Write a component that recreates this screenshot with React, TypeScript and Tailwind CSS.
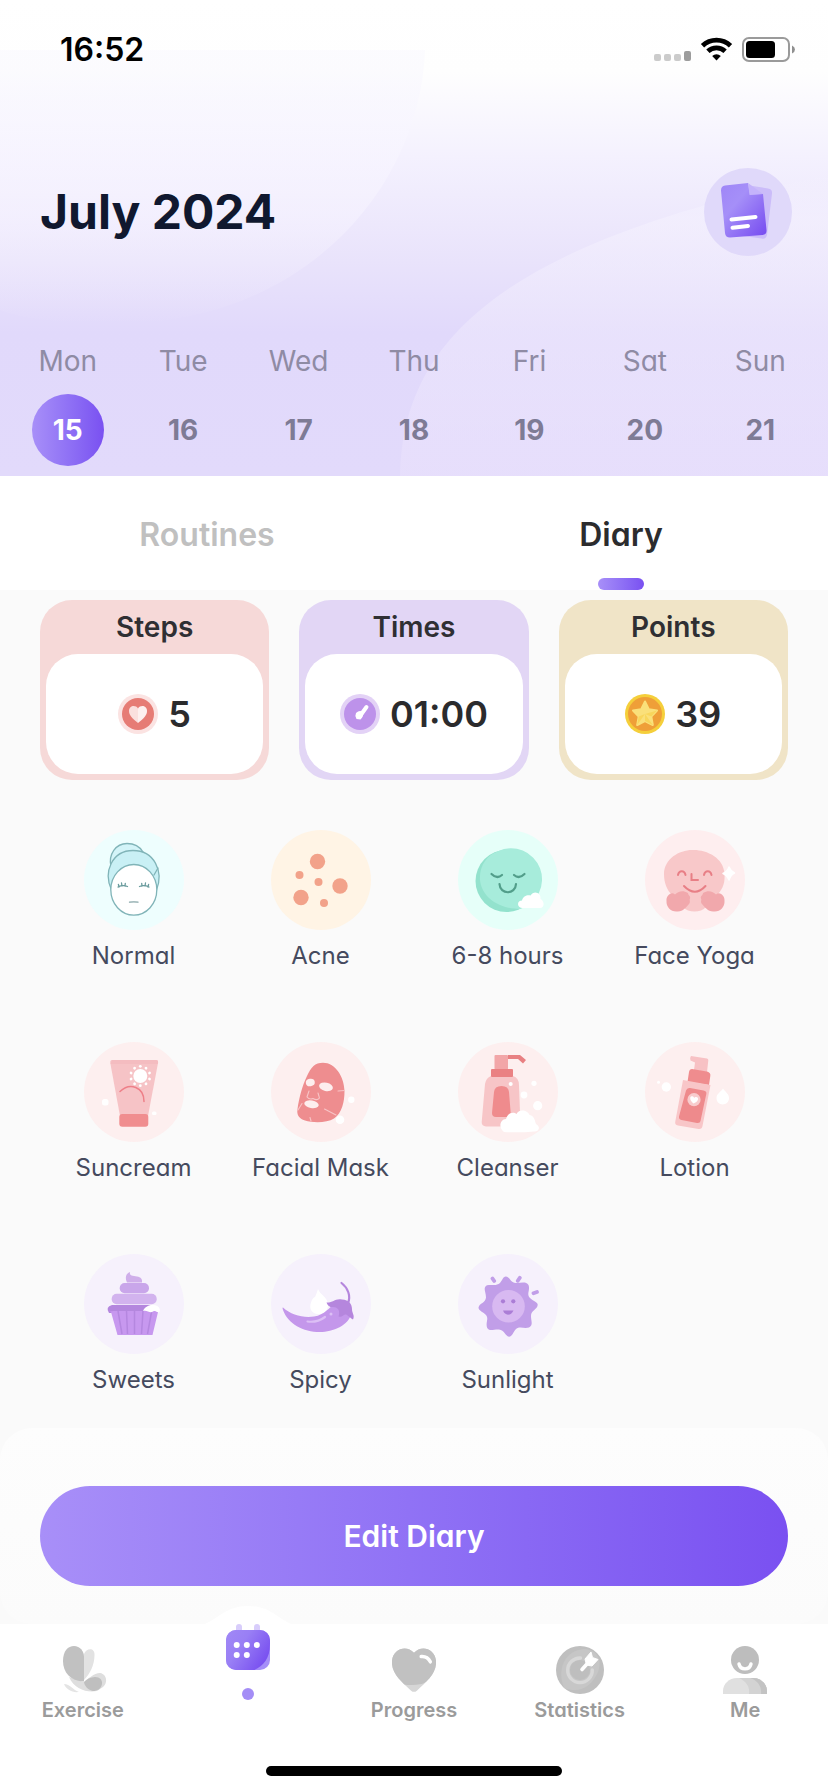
import React, { useState } from "react";

/* ---------- Status bar ---------- */

function StatusBar() {
  return (
    <div className="flex h-7 items-center justify-between pr-[33px] pl-[60px]">
      <span className="text-[32px] leading-7 font-semibold text-black">16:52</span>
      <svg width="142" height="28" viewBox="0 0 142 28" aria-label="Signal, wifi and battery">
        <g fill="#cbcbcb">
          <rect x="1" y="18" width="7" height="7" rx="2" />
          <rect x="11" y="18" width="7" height="7" rx="2" />
          <rect x="21" y="18" width="7" height="7" rx="2" />
        </g>
        <rect x="31" y="15" width="7" height="10" rx="2" fill="#9c9c9c" />
        <g transform="translate(63.5 24.5)" fill="none" stroke="#000" strokeWidth="4.8">
          <path d="M-14 -14.8 A20.4 20.4 0 0 1 14 -14.8" />
          <path d="M-8.6 -9.2 A12.6 12.6 0 0 1 8.6 -9.2" />
          <path d="M0 0 L-4.3 -4.4 A6.2 6.2 0 0 1 4.3 -4.4 Z" fill="#000" stroke="none" />
        </g>
        <rect x="90" y="2" width="46" height="23" rx="6" fill="#fff" stroke="#9a9a9a" strokeWidth="2" />
        <rect x="93" y="5" width="29" height="17" rx="3.5" fill="#000" />
        <path d="M139 9.500 q3 1.500 3 4 t-3 4 z" fill="#8f8f8f" />
      </svg>
    </div>
  );
}

/* ---------- Header ---------- */

function HeaderBackdrop() {
  return (
    <svg
      className="absolute inset-0 h-full w-full"
      viewBox="0 0 828 476"
      preserveAspectRatio="xMidYMid slice"
      aria-hidden="true"
    >
      <defs>
        <linearGradient id="sky" x1="0" y1="0" x2="0" y2="1">
          <stop offset="0" stopColor="#ffffff" />
          <stop offset="0.15" stopColor="#fefefe" />
          <stop offset="0.33" stopColor="#f4f1fe" />
          <stop offset="0.55" stopColor="#e9e3fb" />
          <stop offset="0.7" stopColor="#e1d9fb" />
          <stop offset="1" stopColor="#e2dafb" />
        </linearGradient>
        <linearGradient id="bubbleLeft" x1="0" y1="0" x2="0" y2="1">
          <stop offset="0" stopColor="#f8f7fe" stopOpacity="0.4" />
          <stop offset="0.3" stopColor="#f8f6ff" stopOpacity="0.7" />
          <stop offset="0.6" stopColor="#f6f3ff" stopOpacity="0.6" />
          <stop offset="1" stopColor="#f3effe" stopOpacity="0" />
        </linearGradient>
        <linearGradient id="bubbleRight" x1="0" y1="0" x2="0" y2="1">
          <stop offset="0" stopColor="#f6f4ff" stopOpacity="0" />
          <stop offset="0.15" stopColor="#f6f3ff" stopOpacity="0.5" />
          <stop offset="0.45" stopColor="#f2eefd" stopOpacity="0.45" />
          <stop offset="1" stopColor="#efe6fd" stopOpacity="0.35" />
        </linearGradient>
      </defs>
      <rect width="828" height="476" fill="url(#sky)" />
      <path d="M425 50 C420 190 300 330 100 324 C50 322 20 318 0 310 V50 Z" fill="url(#bubbleLeft)" />
      <path d="M400 476 C402 330 520 240 828 175 V476 Z" fill="url(#bubbleRight)" />
    </svg>
  );
}

function NotesIcon() {
  return (
    <svg width="88" height="88" viewBox="0 0 88 88" aria-hidden="true">
      <defs>
        <linearGradient id="page" x1="0" y1="0" x2="1" y2="1">
          <stop offset="0" stopColor="#9f86f7" />
          <stop offset="0.35" stopColor="#a58ff8" />
          <stop offset="1" stopColor="#7549f0" />
        </linearGradient>
      </defs>
      <path d="M36 16 L64 20.500 Q68.500 21 68 25.500 L63 67 Q62 71.500 57.500 70.500 L32 67 Z" fill="#cbbcf9" />
      <path
        d="M21 17.500 L44 15 L46 26.500 L59 26 L62.500 62 Q63 66.500 58.500 67 L26 69.500 Q21.500 69.500 21 65 L17 22.500 Q17 18 21 17.500 Z"
        fill="url(#page)"
      />
      <path d="M44 15 L59 26 L45.500 27 Z" fill="#c4b3fb" />
      <path d="M27.500 51.500 L51.500 49 M28.500 59.800 L44 58" stroke="#fff" strokeWidth="4" strokeLinecap="round" />
    </svg>
  );
}

const days = [
  { name: "Mon", date: 15 },
  { name: "Tue", date: 16 },
  { name: "Wed", date: 17 },
  { name: "Thu", date: 18 },
  { name: "Fri", date: 19 },
  { name: "Sat", date: 20 },
  { name: "Sun", date: 21 },
];

function Header() {
  const [selected, setSelected] = useState(15);
  return (
    <header className="relative">
      <HeaderBackdrop />
      <div className="relative pt-9 pb-[10px]">
        <StatusBar />
        <div className="mt-[104px] flex items-center justify-between pr-9 pl-10">
          <h1 className="text-[48px] leading-[60px] font-bold text-[#10182f]">July 2024</h1>
          <button type="button" aria-label="Notes" className="rounded-full bg-[#e0d9fa]">
            <NotesIcon />
          </button>
        </div>
        <div className="mt-[85px] grid grid-cols-7 px-[10px]">
          {days.map((d) => (
            <button
              key={d.date}
              type="button"
              onClick={() => setSelected(d.date)}
              className="flex flex-col items-center gap-[13px]"
            >
              <span className="text-[28px] leading-10 text-[#8f8ba4]">{d.name}</span>
              <span
                className={
                  d.date === selected
                    ? "flex h-[72px] w-[72px] items-center justify-center rounded-full bg-gradient-to-r from-[#a88ff8] to-[#7a50f1] text-[28px] font-bold text-white"
                    : "flex h-[72px] w-[72px] items-center justify-center rounded-full text-[28px] font-bold text-[#7e7b95]"
                }
              >
                {d.date}
              </span>
            </button>
          ))}
        </div>
      </div>
    </header>
  );
}

/* ---------- Tabs ---------- */

function Tabs() {
  const [active, setActive] = useState("Diary");
  return (
    <div role="tablist" className="grid grid-cols-2 bg-white">
      {["Routines", "Diary"].map((t) => (
        <button
          key={t}
          type="button"
          role="tab"
          aria-selected={t === active}
          onClick={() => setActive(t)}
          className="flex flex-col items-center gap-[23px] pt-[39px]"
        >
          <span
            className={
              t === active
                ? "text-[32px] leading-10 font-semibold text-[#2c2c2e]"
                : "text-[32px] leading-10 font-semibold text-[#c0c0c0]"
            }
          >
            {t}
          </span>
          <span
            className={
              t === active
                ? "h-3 w-[46px] rounded-full bg-gradient-to-r from-[#a88ff8] to-[#7a50f1]"
                : "h-3 w-[46px]"
            }
          />
        </button>
      ))}
    </div>
  );
}

/* ---------- Summary cards ---------- */

function HeartBadge() {
  return (
    <svg width="40" height="40" viewBox="0 0 40 40" aria-hidden="true">
      <circle cx="20" cy="20" r="20" fill="#fbe3e2" />
      <circle cx="20" cy="20" r="16" fill="#e67c75" />
      <path d="M20 29 C14 24.500 11 21 11 17 C11 11.500 17.500 10.500 20 14.500 Z" fill="#fae0de" />
      <path d="M20 29 C26 24.500 29 21 29 17 C29 11.500 22.500 10.500 20 14.500 Z" fill="#fdf0ef" />
    </svg>
  );
}

function ClockBadge() {
  return (
    <svg width="40" height="40" viewBox="0 0 40 40" aria-hidden="true">
      <circle cx="20" cy="20" r="20" fill="#e3d2f6" />
      <circle cx="20" cy="20" r="16" fill="#bd92ea" />
      <path d="M20 22 L26.500 13" stroke="#fff" strokeWidth="4" strokeLinecap="round" />
      <path d="M16 19 Q20 15.500 23 18.500 Q24 22 20.500 25.500 L16.500 25 Q14.500 22 16 19 Z" fill="#fff" />
    </svg>
  );
}

function StarBadge() {
  return (
    <svg width="40" height="40" viewBox="0 0 40 40" aria-hidden="true">
      <circle cx="20" cy="20" r="20" fill="#f5cf3b" />
      <circle cx="20" cy="20" r="17" fill="#ef9f38" />
      <path
        d="M20 7.500 L23.800 15.200 L32 16.500 L26.300 22.500 L27.800 31 L20 27 L12.200 31 L13.700 22.500 L8 16.500 L16.200 15.200 Z"
        fill="#fae07a"
        stroke="#fae07a"
        strokeWidth="2"
        strokeLinejoin="round"
      />
      <path d="M20 20 L32 16.500 L26.300 22.500 Z M20 20 L27.800 31 L20 27 Z M20 20 L12.200 31 L13.700 22.500 Z" fill="#f8d65c" />
    </svg>
  );
}

function SummaryCard({
  title,
  value,
  tone,
  badge,
}: {
  title: string;
  value: string;
  tone: string;
  badge: React.ReactNode;
}) {
  return (
    <section className={`rounded-[32px] px-[6px] pb-[6px] ${tone}`}>
      <h2 className="text-center text-[28px] leading-[54px] font-semibold text-[#2f2f33]">{title}</h2>
      <div className="flex h-[120px] items-center justify-center gap-[10px] rounded-[32px] bg-white">
        {badge}
        <span className="text-[36px] leading-10 font-semibold text-[#2b2b2d]">{value}</span>
      </div>
    </section>
  );
}

/* ---------- Diary icons, drawn on a 100 unit disc ---------- */

function Disc({ fill, children }: { fill: string; children: React.ReactNode }) {
  return (
    <svg width="100" height="100" viewBox="0 0 100 100" aria-hidden="true">
      <circle cx="50" cy="50" r="50" fill={fill} />
      {children}
    </svg>
  );
}

function NormalIcon() {
  return (
    <Disc fill="#eefefe">
      <g stroke="#80b4b8" strokeWidth="1.3" strokeLinecap="round">
        <path d="M27 37 C24 24 32 13.500 43 13.500 C51 13.500 56 17 59 22 L43 46 Z" fill="#d3f4f8" />
        <path d="M27.500 60 C19 42 28 20.500 49 20.500 C70 20.500 80 41 72.500 60 Z" fill="#c9f0f5" />
        <path d="M70 45 L74 38" fill="none" />
        <ellipse cx="49.800" cy="59.800" rx="23" ry="25.300" fill="#fff" />
        <path d="M34 57 Q39 54.500 43.500 56.500 M35 57 l-0.600 -2.500 M38 56 l-0.500 -3 M41 56 l0.300 -2.600" fill="none" stroke="#6b9c9e" />
        <path d="M55.500 56.500 Q60 54.500 65 57 M58 56 l-0.300 -2.600 M61 56 l0.500 -3 M64 57 l0.600 -2.500" fill="none" stroke="#6b9c9e" />
        <path d="M45.500 72.200 Q50 71.500 54 72.200" fill="none" stroke="#87a6a8" />
      </g>
    </Disc>
  );
}

function AcneIcon() {
  return (
    <Disc fill="#fff4e5">
      <g fill="#f2a28a">
        <circle cx="46.500" cy="31.500" r="7.700" />
        <circle cx="28.500" cy="45" r="4" />
        <circle cx="47.500" cy="52" r="4" />
        <circle cx="69" cy="56" r="7.700" />
        <circle cx="30" cy="67.500" r="7.700" />
        <circle cx="53" cy="73" r="4" />
      </g>
    </Disc>
  );
}

function SleepIcon() {
  return (
    <Disc fill="#e6fff9">
      <circle cx="48.500" cy="51" r="31" fill="#93e2cd" />
      <path d="M40 21.200 A31 31 0 1 1 62 79 C45 79 24 70 22 50 C21 36 29 25 40 21.200 Z" fill="#a7ecdb" />
      <g fill="none" stroke="#529e8a" strokeWidth="2.200" strokeLinecap="round">
        <path d="M33.500 44 Q39 49.500 44 45" />
        <path d="M56 45 Q61 49.500 66.500 44" />
        <path d="M41.500 54 C42 65 57.500 65 58 54" />
      </g>
      <path d="M64 78 C58.500 77 59 70.500 64 70.500 C65 65.500 70 64.500 72.500 65.500 C76 59.500 83.500 63 82.500 69 C87 71.500 86.500 78 82 78 Z" fill="#fff" />
    </Disc>
  );
}

function YogaIcon() {
  return (
    <Disc fill="#feeeef">
      <path
        d="M49 20 C36 19 19 28 19 44 C19 53 22 60 27 65 L38 77 C43 83 56 83 61 77 L72 65 C79 58 80 51 79.500 44 C79 28 62 20 49 20 Z"
        fill="#f8c8c9"
      />
      <path
        d="M43 63 C37 59.500 33 62 30 64.500 C26 61 21 66 21.500 71 C21 77 26 82 32 81.500 C38 82 41 77 44 74 C46 71.500 44 70.500 45 68.500 C46 66 43 65.500 43 63 Z"
        fill="#f1a8ac"
      />
      <path
        d="M58 63 C64 59.500 68 62 71 64.500 C75 61 80 66 79.500 71 C80 77 75 82 69 81.500 C63 82 60 77 57 74 C55 71.500 57 70.500 56 68.500 C55 66 58 65.500 58 63 Z"
        fill="#f1a8ac"
      />
      <g fill="none" stroke="#e87f86" strokeWidth="2" strokeLinecap="round">
        <path d="M33 45 C34 40 39.500 40 40.500 45" />
        <path d="M59 45 C60 40 65.500 40 66.500 45" />
        <path d="M46.500 44 V50 H53" />
        <path d="M39 56 Q50 67.500 60.500 56" />
      </g>
      <path d="M84 37 Q85.500 41 89.500 43 Q85.500 45 84 50 Q82 45 78 43.500 Q82.500 41.500 84 37 Z" fill="#fff" stroke="#fff" strokeWidth="1.500" strokeLinejoin="round" />
    </Disc>
  );
}

const rays = [0, 36, 72, 108, 144, 180, 216, 252, 288, 324];

function SuncreamIcon() {
  return (
    <Disc fill="#fdefef">
      <path d="M28 18 H72 Q74.500 18 74 21 L64 74 H36 L26.300 21 Q26 18 28 18 Z" fill="#f6c3c6" />
      <path d="M28 18 H72 Q74.500 18 74 21 L73.500 22 H26.500 Z" fill="#f4bcc0" />
      <rect x="35.300" y="72" width="29" height="12.700" rx="3" fill="#f08d8f" />
      <circle cx="56.300" cy="34" r="7" fill="#fff" />
      {rays.map((a) => (
        <circle key={a} cx="56.300" cy="24.300" r="1.400" fill="#fff" transform={`rotate(${a} 56.300 34)`} />
      ))}
      <path d="M36 49.500 C46 40 60 45 60 59.500" fill="none" stroke="#ee7f88" strokeWidth="1.500" strokeLinecap="round" />
      <rect x="18" y="57" width="6.500" height="6.500" rx="2.500" fill="#fff" />
      <rect x="68" y="69.500" width="4.500" height="3.500" rx="1.500" fill="#fff" />
    </Disc>
  );
}

function MaskIcon() {
  return (
    <Disc fill="#fdefef">
      <path
        d="M52 20.700 C64 20.700 73 34 73.500 49 C73.500 60 71 71 63 76.500 C56 81 42 81 34 78.500 C28 76.500 25.500 73 26.500 67 C28 57 31 44 36 34 C40 25 44 20.700 52 20.700 Z"
        fill="#ee8d8f"
      />
      <g fill="#fdeeee">
        <ellipse cx="39.300" cy="40.500" rx="4.500" ry="3.700" transform="rotate(-8 39.300 40.500)" />
        <ellipse cx="55" cy="44.800" rx="7" ry="4.200" transform="rotate(12 55 44.800)" />
        <ellipse cx="40.500" cy="62.300" rx="7.300" ry="3.800" transform="rotate(10 40.500 62.300)" />
      </g>
      <g fill="none" stroke="#f8c4c6" strokeWidth="1.100" strokeLinecap="round">
        <path d="M38 49 L36 55 Q38.500 58 42 56.500 Q46 59 48.500 56 L47 51" />
        <path d="M67 49 L73.500 48.500 M53.500 67 L65 73 M27 68 L31 61.500 M39 75.500 L40 79" />
      </g>
      <circle cx="80.300" cy="57.700" r="3.200" fill="#fff" />
      <circle cx="69" cy="77.700" r="4.300" fill="#fff" />
    </Disc>
  );
}

function CleanserIcon() {
  return (
    <Disc fill="#fdefef">
      <rect x="36.500" y="13" width="13.500" height="14.500" rx="1" fill="#f2a6a8" />
      <path d="M50 13 H62 L68 18 L65 21.500 L60 17 H50 Z" fill="#e88082" />
      <path d="M33 34 H55 Q61 36 61 43 L62.500 84.500 H28 Q23.500 84.500 23.700 80 L27 42 Q28 36 33 34 Z" fill="#f7c5c7" />
      <rect x="33" y="27" width="22" height="8" rx="1" fill="#ea8183" />
      <path d="M36 50 Q36.500 44 43.500 44 Q50.500 44 51 50 L53 75 H38 Q34 75 34 71 Z" fill="#ef8b8d" />
      <path d="M46 90 C40 86 42 77 48 77 C50 70 56 70 58.500 72 C62 66 70 69 71.500 73 C77 74 77 80 78 82 C83 85 81 90 76 89.500 C66 90.500 55 90.500 46 90 Z" fill="#fff" />
      <circle cx="52.700" cy="42" r="2" fill="#fff" />
      <circle cx="76" cy="41.300" r="2.600" fill="#fff" />
      <circle cx="66" cy="53" r="3.400" fill="#fff" />
      <circle cx="79.700" cy="63.700" r="4.600" fill="#fff" />
    </Disc>
  );
}

function LotionIcon() {
  return (
    <Disc fill="#fdefef">
      <path d="M46 14 L62 16.500 Q63.500 17 63.300 18.500 L62 30 L49 28 L50 20.500 L45.500 18.500 Q44.500 15.500 46 14 Z" fill="#f7c1c4" />
      <path d="M47 27 L62 29.500 Q66 30.500 65.300 34 L64 43 L42.500 40 L44 30 Q44.500 27 47 27 Z" fill="#ef8c8e" />
      <path d="M38 38 L65.500 43 L57.500 84 Q57 87.500 53.500 87 L33 83.500 Q29.500 83 30.300 79.500 Z" fill="#f8c6c8" />
      <path d="M45 46 L58.500 48.500 Q62 49.200 61.300 52 L55.500 79 Q55 81.500 52 81 L36.500 78 Q33.500 77.300 34 74.500 L41 48.500 Q42 45.500 45 46 Z" fill="#ee8a8c" />
      <circle cx="49" cy="57.700" r="6.600" fill="#f8cccd" />
      <path d="M48.500 61.500 C44.500 58.500 44.500 54.500 46.700 54.300 C48.500 54 49 55.500 49.200 56 C50 54.700 53.500 54.500 53 57.500 C52.500 59.500 50.500 60.500 48.500 61.500 Z" fill="#fff" />
      <circle cx="21.300" cy="45" r="4.700" fill="#fff" />
      <circle cx="13.500" cy="40.300" r="1.500" fill="#fff" />
      <path d="M78 46.500 C80 50 84 51.500 84 56 C84 64.500 71.500 64.500 71.500 56 C71.500 51.500 76 50 78 46.500 Z" fill="#fff" />
    </Disc>
  );
}

function SweetsIcon() {
  return (
    <Disc fill="#f6f1fc">
      <path d="M46 18 C45 22 49 21.500 53 22.500 C57 23 58.500 25 58 28.500 H43 C41 24 41.500 19.500 46 18 Z" fill="#cfaeea" />
      <rect x="35.700" y="29" width="29.300" height="10.300" rx="5" fill="#c9a6ea" />
      <rect x="27.700" y="39.800" width="45" height="10.400" rx="5" fill="#d2b3ee" />
      <path d="M28 51 H66 L74 57 V59 H25 Q21 53 28 51 Z" fill="#b487de" />
      <path d="M24 56 Q27 58 29 57 H73 L74 58 L68.500 81 H33.500 L27 58 Z" fill="#c798ef" />
      <path d="M34 57 L38 80 M42.500 57 L43.500 80 M50.500 57 V80 M59 57 L57.500 80 M67.500 58 L63.500 80" stroke="#b587e0" strokeWidth="1.500" />
      <path d="M59 57 C61 52 66 50.500 70 51 C76 51.500 77 57 75 58.500 C72 58.500 72 56 69 57.500 C66 60 63 55.500 59 57 Z" fill="#fff" />
    </Disc>
  );
}

function SpicyIcon() {
  return (
    <Disc fill="#f6f1fc">
      <path d="M47 35 C49 41 57 43 57 51 C57 57 52 61 46 60 C40 59 38 54 40 48.500 C41 45 42.500 43.500 44 43 C45 41 46 38 47 35 Z" fill="#fff" />
      <path d="M12 53.500 C20 61 32 64 43 62.500 C54 61 58 53 64 50 L80 60 C78 71 62 78 49 78 C32 78 17 70 12 56 Q11 53 12 53.500 Z" fill="#c497eb" />
      <path d="M36.500 67.500 C44 68.500 50 66 54 63" fill="none" stroke="#dcbff5" strokeWidth="2.200" strokeLinecap="round" />
      <circle cx="60" cy="60" r="1.500" fill="#dcbff5" />
      <path d="M70.500 29 C77 34 80 42 77 49" fill="none" stroke="#b586dd" strokeWidth="2.200" strokeLinecap="round" />
      <path d="M55.500 48.500 C62 49 64 44 71 45.500 C78 46 81 50 81 55 C81 60 84 61 82 65.500 C78 63 76 60 74 60.500 C71 62 71 63.500 67.500 62.500 C69 58 68 55 65 53.500 C61 53 57.500 54 55.500 48.500 Z" fill="#b586dd" />
    </Disc>
  );
}

function SunlightIcon() {
  return (
    <Disc fill="#f6f1fc">
      <path
        d="M47.700 22.500 C52 22.500 52 29 58 29 C63 29 68 27 70.500 31 C72.500 36 68 40 72 44 C75 47 80 48 79.700 51 C79 56 73 56 73 62 C73 67 75.500 71 71 73.500 C66 75 62 72 58 75 C55 78 54.500 82.500 51 82.700 C47 82 46.500 76 41 75.500 C36 75 31 78 29 73.500 C27.500 68 31 65 28 61 C25.500 58 20.500 57 20.500 53.500 C21.500 49 27.500 49 28 43.500 C28 38 24.500 34 29 31.300 C34 30 38 32.500 42 29 C44.500 26 45 22.700 47.700 22.500 Z"
        fill="#c19ee8"
      />
      <circle cx="50.500" cy="52.300" r="16.300" fill="#d8b9f1" />
      <circle cx="45" cy="47.300" r="2.100" fill="#ab7dd6" />
      <circle cx="55.300" cy="47.300" r="2.100" fill="#ab7dd6" />
      <path d="M45 56.500 H55.500 Q53.500 60.700 50 60.700 Q46.500 60.500 45 56.500 Z" fill="#ab7dd6" />
      <path d="M34.500 24.500 L36.200 27 M61.800 23.800 L59.800 26.800 M75.500 39.200 L79 38" stroke="#c19ee8" strokeWidth="3.800" strokeLinecap="round" />
    </Disc>
  );
}

const entries = [
  { label: "Normal", Icon: NormalIcon },
  { label: "Acne", Icon: AcneIcon },
  { label: "6-8 hours", Icon: SleepIcon },
  { label: "Face Yoga", Icon: YogaIcon },
  { label: "Suncream", Icon: SuncreamIcon },
  { label: "Facial Mask", Icon: MaskIcon },
  { label: "Cleanser", Icon: CleanserIcon },
  { label: "Lotion", Icon: LotionIcon },
  { label: "Sweets", Icon: SweetsIcon },
  { label: "Spicy", Icon: SpicyIcon },
  { label: "Sunlight", Icon: SunlightIcon },
];

/* ---------- Bottom navigation ---------- */

function ExerciseIcon() {
  return (
    <svg width="48" height="48" viewBox="0 0 48 48" aria-hidden="true">
      <path d="M25 34 V8 C27 2 36 1 35.500 9 C35.500 19 31 28 25 34 Z" fill="#e2e2e2" />
      <path d="M25 36 C29 33 35 27 41 27 C48 28 49 37 44 41 L38 45 C28 47 15 43 10 31 Z" fill="#dedede" />
      <path d="M25 35.500 C11 35 4 26 4 15 C4 5 9 0 15 0 C21 0 25 5 25 11 Z" fill="#c1c1c1" />
      <path d="M25 36 C28 33 31 31.500 36 31 C41 31 43.500 34 43 38 C42 43 38 45 34 45 C29 44 25.500 40 25 36 Z" fill="#bfbfbf" />
      <path d="M5 38 C11 38 14 44 20 46 C13 47 7 43 5 38 Z" fill="#e4e4e4" />
    </svg>
  );
}

function CalendarIcon() {
  return (
    <svg width="48" height="48" viewBox="0 2 48 48" aria-hidden="true">
      <defs>
        <linearGradient id="cal" x1="0" y1="0" x2="1" y2="0.600">
          <stop offset="0" stopColor="#a28af6" />
          <stop offset="0.450" stopColor="#997ff5" />
          <stop offset="1" stopColor="#7950f0" />
        </linearGradient>
        <clipPath id="calBody">
          <rect x="2" y="8" width="44" height="40" rx="10" />
        </clipPath>
      </defs>
      <rect x="12" y="2" width="6" height="12" rx="3" fill="#d8cdfb" />
      <rect x="30" y="2" width="6" height="12" rx="3" fill="#d8cdfb" />
      <rect x="2" y="8" width="44" height="40" rx="10" fill="#a58ff8" />
      <path d="M0 6 H46 V22 C46 38 38 45 28 49 H0 Z" fill="url(#cal)" clipPath="url(#calBody)" />
      <g fill="#fff">
        <circle cx="12.700" cy="23" r="3" />
        <circle cx="22.800" cy="23" r="3" />
        <circle cx="32.800" cy="23" r="3" />
        <circle cx="12.700" cy="33" r="3" />
        <circle cx="22.800" cy="33" r="3" />
      </g>
    </svg>
  );
}

function ProgressIcon() {
  return (
    <svg width="48" height="48" viewBox="0 0 50 50" aria-hidden="true">
      <defs>
        <clipPath id="heart">
          <path d="M22 46.500 C12 37 2 29 2 17 C2 3 17 -2 25 7 C33 -2 48 3 48 17 C48 29 38 37 28 46.500 Q25 49 22 46.500 Z" />
        </clipPath>
      </defs>
      <g clipPath="url(#heart)">
        <rect width="50" height="50" fill="#d6d6d6" />
        <path d="M0 0 H50 V22 C46 36 34 43 14 40 L0 26 Z" fill="#c1c1c1" />
      </g>
      <path d="M32.500 11 Q39 10.500 42 16.500" fill="none" stroke="#fff" strokeWidth="3.600" strokeLinecap="round" />
    </svg>
  );
}

function StatisticsIcon() {
  return (
    <svg width="48" height="48" viewBox="0 0 48 48" aria-hidden="true">
      <circle cx="24" cy="24" r="24" fill="#bfbfbf" />
      <path d="M8 42 C0 22 10 4 28 3 C42 4 46 14 42 26 C36 40 24 48 8 42 Z" fill="#c6c6c6" />
      <circle cx="24" cy="24" r="10" fill="#bebebe" />
      <path d="M24.500 12 A12.300 12.300 0 1 0 36.300 24" fill="none" stroke="#d8d8d8" strokeWidth="3.400" strokeLinecap="round" />
      <path d="M26 23.500 L35 13.500" stroke="#fff" strokeWidth="3.600" strokeLinecap="round" />
      <path d="M29 13 L35 6 L36.500 11.500 L42 13.500 L36 20 L30.500 19 Z" fill="#fff" stroke="#fff" strokeWidth="1" strokeLinejoin="round" />
    </svg>
  );
}

function MeIcon() {
  return (
    <svg width="48" height="48" viewBox="0 0 48 48" aria-hidden="true">
      <circle cx="24" cy="14" r="14" fill="#bdbdbd" />
      <path d="M18 18 C19.500 24.500 28.500 24.500 30 18" fill="none" stroke="#fff" strokeWidth="3.400" strokeLinecap="round" />
      <path d="M2 48 V45 C2 38 8 32 16 32 H32 C40 32 46 38 46 45 V48 Z" fill="#e0e0e0" />
      <path d="M18 32 C26 36 29 41 28 48 H46 V45 C46 38 40 32 32 32 Z" fill="#d3d3d3" />
      <path d="M29 32 C36 34 41 40 40 48 H46 V45 C46 38 40 32 32 32 Z" fill="#c3c3c3" />
    </svg>
  );
}

const navItems = [
  { label: "Exercise", Icon: ExerciseIcon },
  { label: "Calendar", Icon: CalendarIcon, active: true },
  { label: "Progress", Icon: ProgressIcon },
  { label: "Statistics", Icon: StatisticsIcon },
  { label: "Me", Icon: MeIcon },
];

function BottomNav() {
  return (
    <nav className="bg-white pb-4">
      <ul className="grid grid-cols-5">
        {navItems.map(({ label, Icon, active }) => (
          <li key={label}>
            {active ? (
              <a href="#calendar" aria-label={label} aria-current="page" className="relative flex flex-col items-center gap-4">
                <svg className="absolute -top-[18px]" width="104" height="20" viewBox="0 0 104 20" aria-hidden="true">
                  <path d="M0 20 C20 18 26 0 52 0 C78 0 84 18 104 20 Z" fill="#fff" />
                </svg>
                <span className="relative">
                  <Icon />
                </span>
                <span className="h-3 w-3 rounded-full bg-[#a48df6]" />
              </a>
            ) : (
              <a href={`#${label.toLowerCase()}`} className="flex flex-col items-center gap-1 pt-[22px]">
                <Icon />
                <span className="text-[20px] leading-6 font-semibold text-[#9b9b9b]">{label}</span>
              </a>
            )}
          </li>
        ))}
      </ul>
      <div className="mx-auto mt-11 h-[10px] w-[296px] rounded-full bg-black" />
    </nav>
  );
}

/* ---------- Page ---------- */

export default function App() {
  return (
    <div className="flex min-h-screen flex-col bg-[#fafafa] font-['Inter','Liberation_Sans',sans-serif] [font-feature-settings:'cv11'] [&_svg]:block">
      <Header />
      <Tabs />
      <main className="grow px-10 pt-[10px] pb-[34px]">
        <div className="grid grid-cols-3 gap-[30px]">
          <SummaryCard title="Steps" value="5" tone="bg-[#f6d9d8]" badge={<HeartBadge />} />
          <SummaryCard title="Times" value="01:00" tone="bg-[#e2d6f5]" badge={<ClockBadge />} />
          <SummaryCard title="Points" value="39" tone="bg-[#f0e4c7]" badge={<StarBadge />} />
        </div>
        <ul className="mt-[50px] grid grid-cols-4 gap-y-[70px]">
          {entries.map(({ label, Icon }) => (
            <li key={label} className="flex flex-col items-center gap-[10px]">
              <Icon />
              <span className="text-[24px] leading-8 whitespace-nowrap text-[#454a5e]">{label}</span>
            </li>
          ))}
        </ul>
      </main>
      <div className="-mt-[2px] rounded-[32px] bg-gradient-to-b from-[#fdfdfd] to-[#fbfbfb] px-10 pt-[58px] pb-[38px]">
        <button
          type="button"
          className="h-[100px] w-full rounded-full bg-gradient-to-r from-[#a88ff8] to-[#7a50f1] text-[30px] font-semibold text-white"
        >
          Edit Diary
        </button>
      </div>
      <BottomNav />
    </div>
  );
}
